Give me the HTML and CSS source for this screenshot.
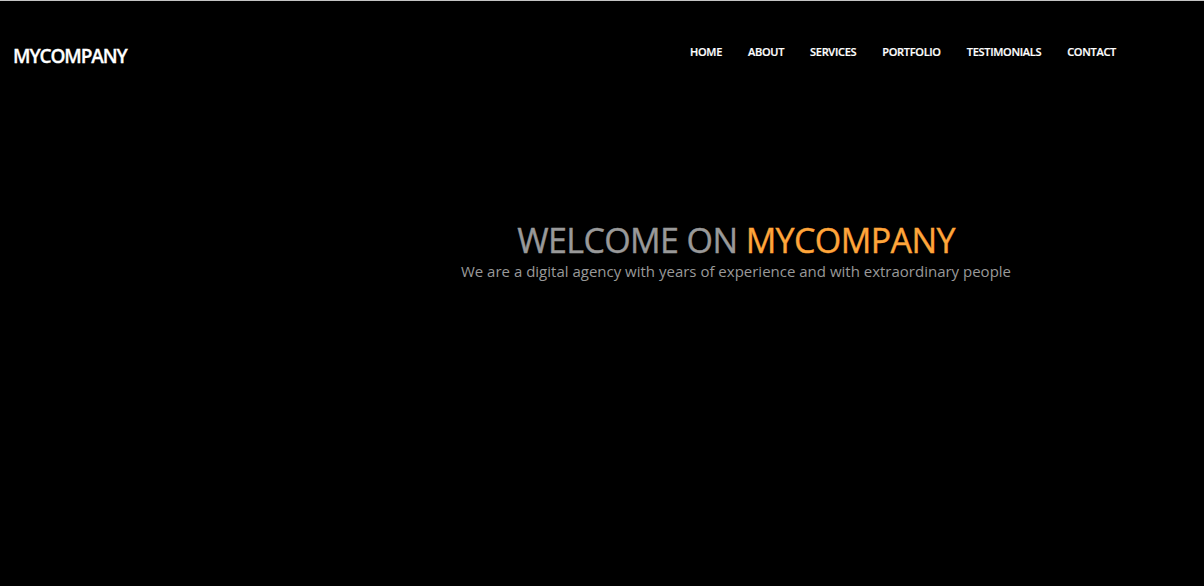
FILE: index.html
```html
<!DOCTYPE html>
<html>
<head>
<meta charset="utf-8">
<link rel="stylesheet" href="styles.css">
</head>
<body>
<div class="page">
  <header class="header">
    <div class="logo">MYCOMPANY</div>
    <nav class="nav">
      <a href="#">HOME</a>
      <a href="#">ABOUT</a>
      <a href="#">SERVICES</a>
      <a href="#">PORTFOLIO</a>
      <a href="#">TESTIMONIALS</a>
      <a href="#">CONTACT</a>
    </nav>
  </header>
  <section class="hero">
    <h1 class="hero-title">WELCOME ON <span class="accent">MYCOMPANY</span></h1>
    <p class="hero-sub">We are a digital agency with years of experience and with extraordinary people</p>
  </section>
</div>
</body>
</html>
```

FILE: styles.css
```css
html, body {
  margin: 0;
  padding: 0;
  background: #000;
}
body {
  font-family: "Open Sans", "Liberation Sans", sans-serif;
  border-top: 1px solid #c4c4c4;
  height: 585px;
  overflow: hidden;
}
.page {
  display: flex;
  flex-direction: column;
}
.header {
  display: flex;
  align-items: center;
  justify-content: space-between;
  padding: 33px 88px 0 13px;
  height: 44px;
}
.logo {
  color: #fff;
  font-weight: 600;
  font-size: 19px;
  letter-spacing: -1.1px;
  -webkit-text-stroke: 0.3px #fff;
}
.nav {
  display: flex;
  gap: 26px;
  margin-top: -9px;
  padding-left: 1px;
}
.nav a {
  color: #fff;
  text-decoration: none;
  font-weight: 600;
  font-size: 11px;
  letter-spacing: -0.3px;
  -webkit-text-stroke: 0.2px #fff;
}
.hero {
  display: flex;
  flex-direction: column;
  align-items: center;
  padding-left: 268px;
  margin-top: 142px;
}
.hero-title {
  margin: 0;
  font-weight: 400;
  font-size: 34px;
  color: #999;
  letter-spacing: -0.6px;
  line-height: 40px;
  -webkit-text-stroke: 0.4px currentColor;
}
.accent {
  color: #ffa53a;
}
.hero-sub {
  margin: 0;
  font-size: 15px;
  color: #999;
  line-height: 22px;
}
```
